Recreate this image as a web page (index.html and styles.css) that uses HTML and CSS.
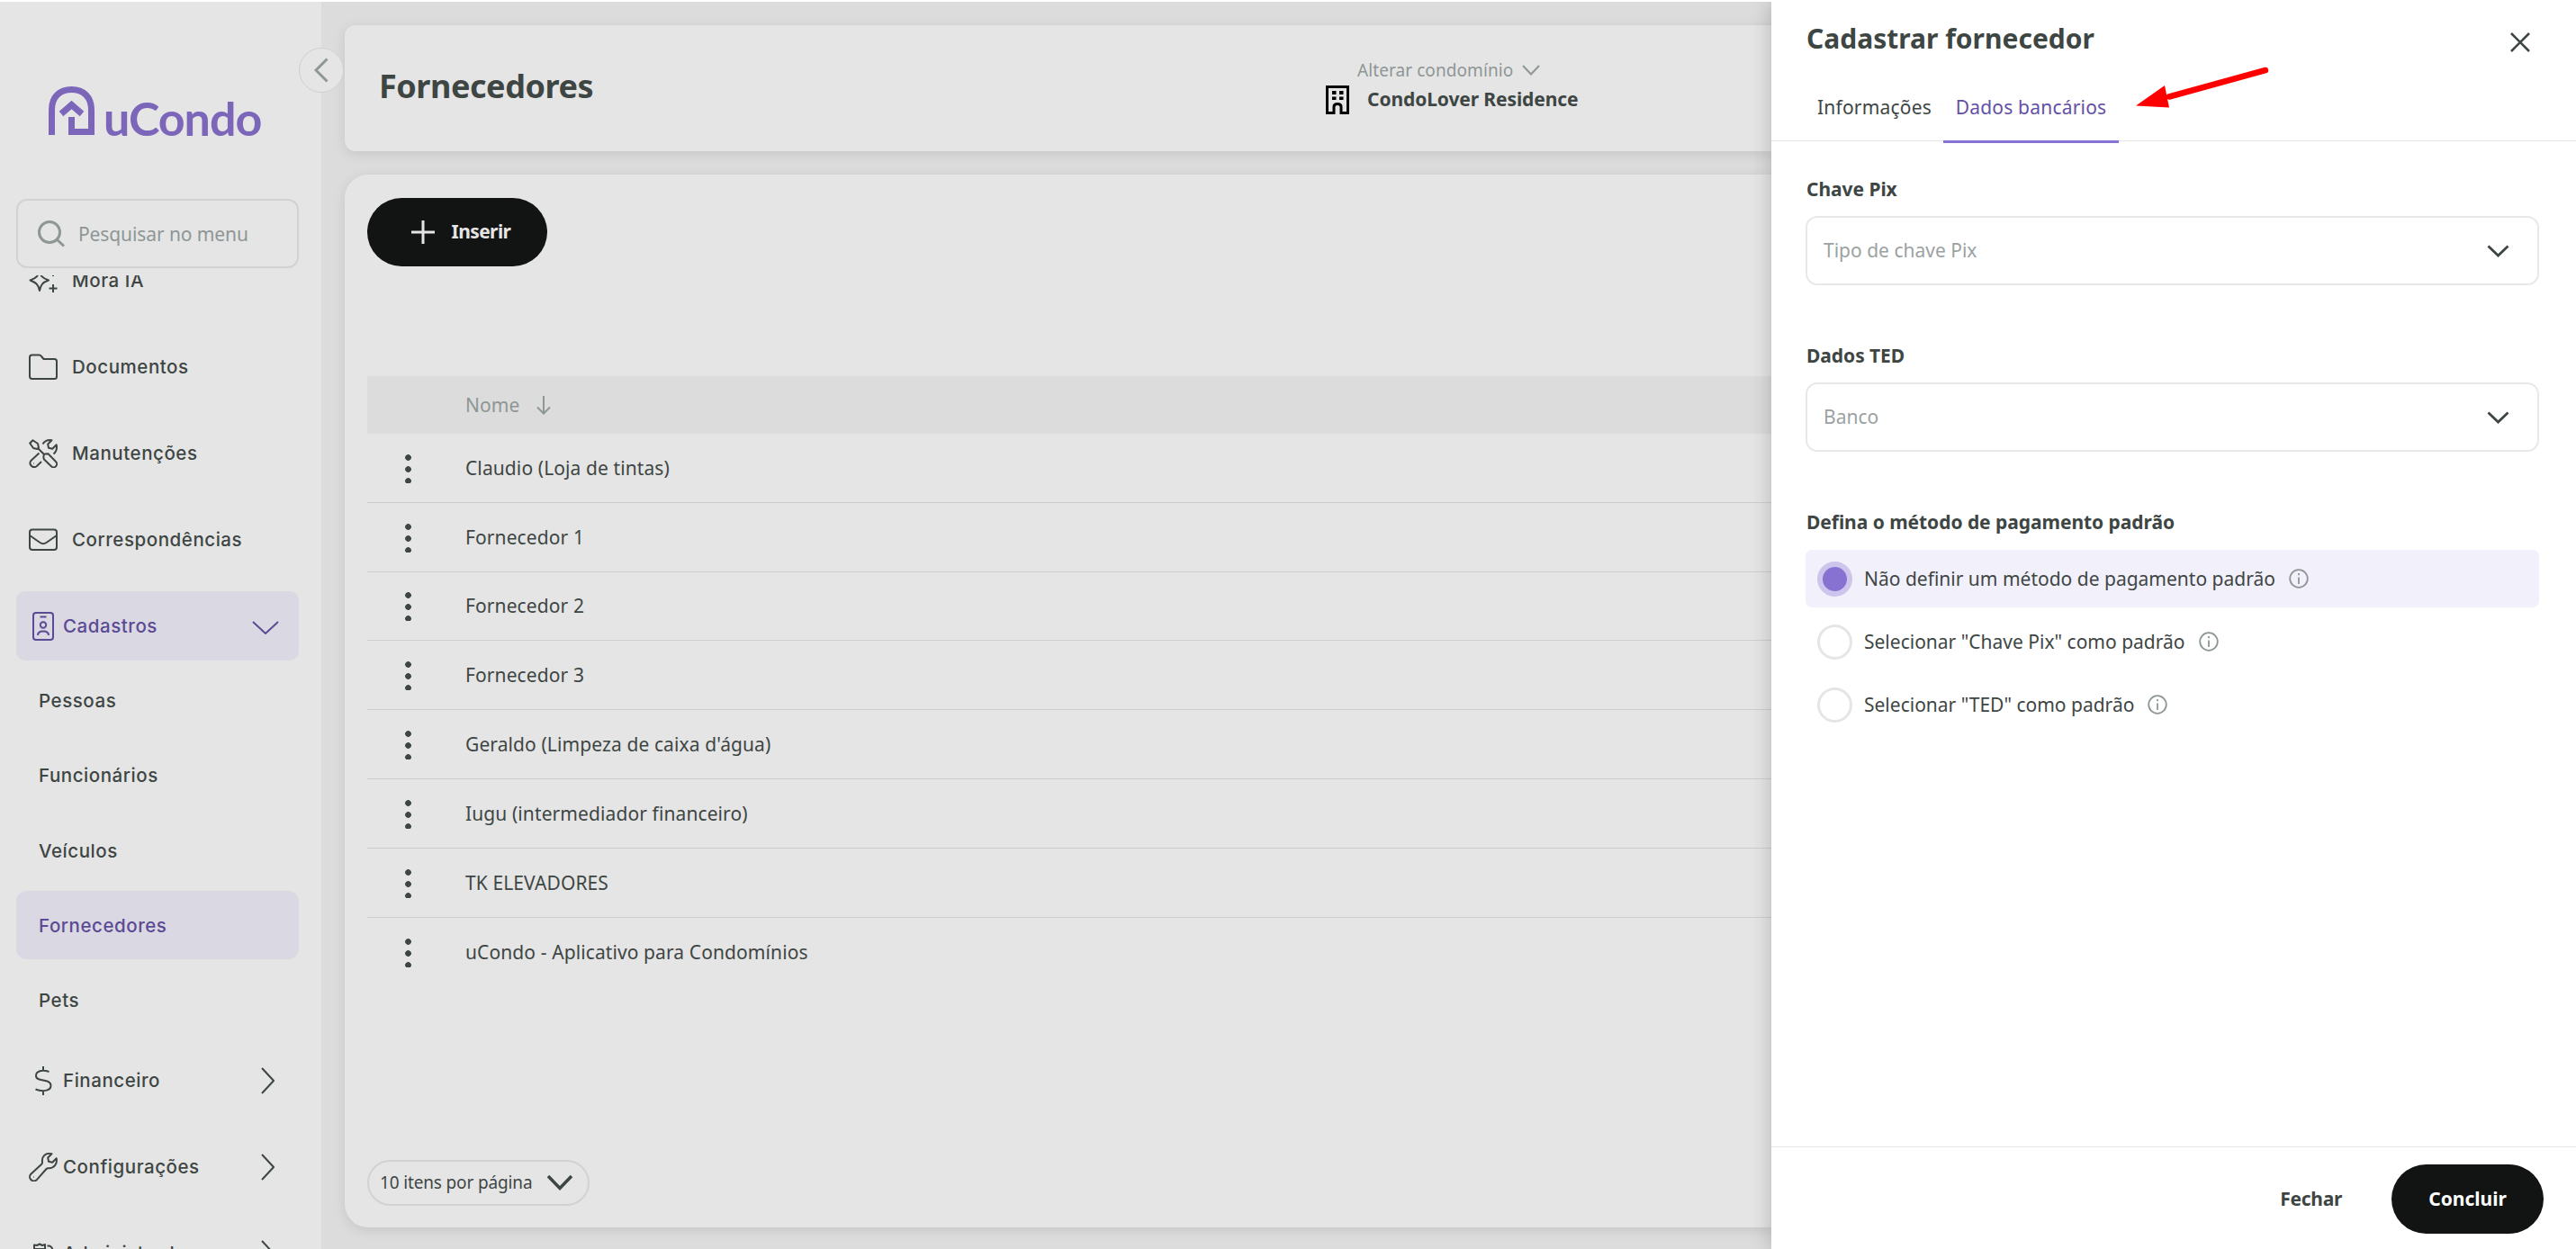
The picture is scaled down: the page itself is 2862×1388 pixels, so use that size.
FILE: index.html
```html
<!DOCTYPE html>
<html lang="pt-br">
<head>
    <meta charset="UTF-8">
    <meta name="viewport" content="width=device-width, initial-scale=1.0">
    <title>uCondo - Fornecedores</title>
    <link rel="stylesheet" href="styles.css">
</head>
<body>
    <div class="app">
        <!-- Menu lateral -->
        <aside class="sidebar">
            <div class="logo">
                <svg width="51" height="54" viewBox="0 0 51 54" fill="none" stroke="currentColor" stroke-width="7">
                    <path d="M3.5 54V26C3.5 12 12 3.5 25.5 3.5S47.500 12 47.500 26V50.500H25.500V34"/>
                    <path d="M14 30.500L25.500 20.500L37 30.500"/>
                </svg>
                <span>uCondo</span>
            </div>
            <button class="collapse-btn">
                <svg width="16" height="28" viewBox="0 0 16 28" fill="none" stroke="currentColor" stroke-width="3"><path d="M14.500 1.500L2 14L14.500 26.500"/></svg>
            </button>
            <div class="search">
                <svg width="32" height="32" viewBox="0 0 32 32" fill="none" stroke="currentColor" stroke-width="3"><circle cx="14" cy="14" r="11.500"/><path d="M22 22L30 29.500"/></svg>
                <span>Pesquisar no menu</span>
            </div>
            <nav class="menu">
                <div class="menu-list">
                    <div class="menu-item">
                        <svg class="menu-icon" viewBox="0 0 32 32"><path d="M12 4C13 11 15 13 22 15.500C15 18 13.500 20 12 27C10.500 20 8 18 1.500 15.500C8 13 10.500 11 12 4ZM27 20V29M22.500 24.500H31.500M27 4V11"/></svg>
                        <span>Mora IA</span>
                    </div>
                    <div class="menu-item">
                        <svg class="menu-icon" viewBox="0 0 32 32"><path d="M1 26V5Q1 2.500 3.500 2.500H11.500Q13 2.500 14 4L16.500 7H28.500Q31 7 31 9.500V26.500Q31 29 28.500 29H3.500Q1 29 1 26Z"/></svg>
                        <span>Documentos</span>
                    </div>
                    <div class="menu-item">
                        <svg class="menu-icon" viewBox="0 0 32 32"><path d="M1.200 4.500L4.500 1.200L10 5L11 9.500L9.500 11L5 10ZM10.500 10.500L17 17M17.500 16.500L21.500 16.200L30 25A3.500 3.500 0 0 1 25 30.300L17 22.500Q15.500 19 17.500 16.500M15.500 5.500C18 1.500 21 .5 25.500 1.200L21.200 5.500L22 9.800L26.200 10.800L30.700 6.300C31.500 10 31 13.500 27.500 16.500M11.500 15.500L2.300 24A4.500 4.500 0 0 0 8.600 30.200L14 25"/><path d="M5 27H5.500"/></svg>
                        <span>Manutenções</span>
                    </div>
                    <div class="menu-item">
                        <svg class="menu-icon" viewBox="0 0 32 32"><rect x="1" y="4.500" width="30" height="22.500" rx="3"/><path d="M1 11L12.500 19Q16 21.500 19.500 19L31 11"/></svg>
                        <span>Correspondências</span>
                    </div>
                    <div class="menu-item menu-group active">
                        <svg class="menu-icon" viewBox="0 0 32 32"><rect x="5" y="1" width="22" height="30" rx="3"/><path d="M12.500 5.500H19.500M10 26C10 22.500 12 21.500 16 21.500S22 22.500 22 26"/><circle cx="16" cy="14.500" r="3.200"/></svg>
                        <span>Cadastros</span>
                        <svg class="menu-arrow open" width="30" height="15" viewBox="0 0 30 15"><path d="M1 1L15 14L29 1"/></svg>
                    </div>
                    <div class="submenu">
                        <div class="submenu-item">Pessoas</div>
                        <div class="submenu-item">Funcionários</div>
                        <div class="submenu-item">Veículos</div>
                        <div class="submenu-item active">Fornecedores</div>
                        <div class="submenu-item">Pets</div>
                    </div>
                    <div class="menu-item menu-group">
                        <svg class="menu-icon" viewBox="0 0 32 32"><path d="M22.500 6C15 3.500 8 5 8 10.500C8 18 24.500 13 24.500 21.500C24.500 27.500 15 28.500 7.500 25.500M16 0V4.500M16 27.500V32"/></svg>
                        <span>Financeiro</span>
                        <svg class="menu-arrow" width="15" height="30" viewBox="0 0 15 30"><path d="M1 1L14 15L1 29"/></svg>
                    </div>
                    <div class="menu-item menu-group">
                        <svg class="menu-icon" viewBox="0 0 32 32"><path d="M25.500 1.300C19 -.5 14 4 15 10.500C15.100 11.500 14.800 12.200 14.200 12.800L2.300 23.700A4.600 4.600 0 0 0 8.800 30.200L19.500 18C20.100 17.400 20.900 17.200 21.800 17.300C28 17.600 32 12.500 30.700 6.300L26.200 10.800L22 9.800L21.200 5.500Z"/><path d="M5 27H5.500"/></svg>
                        <span>Configurações</span>
                        <svg class="menu-arrow" width="15" height="30" viewBox="0 0 15 30"><path d="M1 1L14 15L1 29"/></svg>
                    </div>
                    <div class="menu-item menu-group">
                        <svg class="menu-icon" viewBox="0 0 32 32"><path d="M6 32V6.500L9 7L12 5.500L15 7L18 6V32M6 11H18M20.500 7.500H23Q26 8.500 26.500 12V32"/></svg>
                        <span>Administradoras</span>
                        <svg class="menu-arrow" width="15" height="30" viewBox="0 0 15 30"><path d="M1 1L14 15L1 29"/></svg>
                    </div>
                </div>
            </nav>
        </aside>

        <!-- Conteúdo principal -->
        <main class="content">
            <header class="card page-header">
                <h1>Fornecedores</h1>
                <div class="condo">
                    <div class="condo-switch">
                        <span>Alterar condomínio</span>
                        <svg width="20" height="12" viewBox="0 0 20 12" fill="none" stroke="currentColor" stroke-width="2"><path d="M1 1L10 10.500L19 1"/></svg>
                    </div>
                    <div class="condo-name">
                        <svg width="26" height="32" viewBox="0 0 26 32"><path d="M1.500 1.500H24.500V30.500H17V23.500Q17 20.500 13 20.500T9 23.500V30.500H1.500Z" fill="none" stroke="#000" stroke-width="3"/><path d="M7 6H11.500V10H7ZM15 6H19.500V10H15ZM7 12.500H11.500V16H7ZM15 12.500H19.500V16H15Z"/></svg>
                        <strong>CondoLover Residence</strong>
                    </div>
                </div>
            </header>

            <section class="card list-card">
                <button class="btn insert-btn">
                    <svg width="26" height="26" viewBox="0 0 26 26" stroke="currentColor" stroke-width="3"><path d="M13 0V26M0 13H26"/></svg>
                    <span>Inserir</span>
                </button>
                <div class="table">
                    <div class="table-head">
                        <span>Nome</span>
                        <svg width="16" height="22" viewBox="0 0 16 22" fill="none" stroke="currentColor" stroke-width="2"><path d="M8 1V20M1 13.500L8 20.500L15 13.500"/></svg>
                    </div>
                    <div class="row"><i class="dots"></i><span>Claudio (Loja de tintas)</span></div>
                    <div class="row"><i class="dots"></i><span>Fornecedor 1</span></div>
                    <div class="row"><i class="dots"></i><span>Fornecedor 2</span></div>
                    <div class="row"><i class="dots"></i><span>Fornecedor 3</span></div>
                    <div class="row"><i class="dots"></i><span>Geraldo (Limpeza de caixa d'água)</span></div>
                    <div class="row"><i class="dots"></i><span>Iugu (intermediador financeiro)</span></div>
                    <div class="row"><i class="dots"></i><span>TK ELEVADORES</span></div>
                    <div class="row"><i class="dots"></i><span>uCondo - Aplicativo para Condomínios</span></div>
                </div>
                <button class="page-size">
                    <span>10 itens por página</span>
                    <svg width="30" height="18" viewBox="0 0 30 18" fill="none" stroke="currentColor" stroke-width="3.500"><path d="M2 2L15 15.500L28 2"/></svg>
                </button>
            </section>
        </main>

        <!-- Painel de cadastro -->
        <div class="drawer">
            <div class="drawer-header">
                <h2>Cadastrar fornecedor</h2>
                <svg width="22" height="22" viewBox="0 0 22 22" stroke="currentColor" stroke-width="2.600"><path d="M1 1L21 21M21 1L1 21"/></svg>
            </div>
            <div class="tabs">
                <div class="tab tab-info">Informações</div>
                <div class="tab tab-bank active">Dados bancários</div>
            </div>
            <svg class="pointer" width="150" height="48" viewBox="0 0 150 48"><path d="M37 34.500L144 5" stroke="#ff0000" stroke-width="6.500" stroke-linecap="round"/><path d="M0 44.500L32 22L37 46.500Z" fill="#ff0000"/></svg>
            <div class="drawer-body">
                <h3>Chave Pix</h3>
                <div class="select">
                    <span>Tipo de chave Pix</span>
                    <svg width="25" height="14" viewBox="0 0 25 14"><path d="M1.500 1.500L12.500 12L23.500 1.500"/></svg>
                </div>
                <h3>Dados TED</h3>
                <div class="select">
                    <span>Banco</span>
                    <svg width="25" height="14" viewBox="0 0 25 14"><path d="M1.500 1.500L12.500 12L23.500 1.500"/></svg>
                </div>
                <h3 class="method-title">Defina o método de pagamento padrão</h3>
                <div class="options">
                    <div class="option selected">
                        <i class="radio"></i>
                        <span>Não definir um método de pagamento padrão</span>
                        <svg class="info" viewBox="0 0 22 22"><circle cx="11" cy="11" r="9.800"/><path d="M11 9.500V17M11 5V7.300"/></svg>
                    </div>
                    <div class="option">
                        <i class="radio"></i>
                        <span>Selecionar "Chave Pix" como padrão</span>
                        <svg class="info" viewBox="0 0 22 22"><circle cx="11" cy="11" r="9.800"/><path d="M11 9.500V17M11 5V7.300"/></svg>
                    </div>
                    <div class="option">
                        <i class="radio"></i>
                        <span>Selecionar "TED" como padrão</span>
                        <svg class="info" viewBox="0 0 22 22"><circle cx="11" cy="11" r="9.800"/><path d="M11 9.500V17M11 5V7.300"/></svg>
                    </div>
                </div>
            </div>
            <div class="drawer-footer">
                <button class="link-btn">Fechar</button>
                <button class="btn submit-btn">Concluir</button>
            </div>
        </div>
    </div>
</body>
</html>
```
FILE: styles.css
```css
* {
    box-sizing: border-box;
}
body {
    margin: 0;
    padding-top: 2px;
    height: 1388px;
    overflow: hidden;
    background-color: #fff;
    font-family: "Noto Sans", "Open Sans", sans-serif;
    font-size: 21px;
    color: #3e4644;
}
h1, h2, h3 {
    margin: 0;
    white-space: nowrap;
}
button {
    font: inherit;
    color: inherit;
    border: none;
    background: none;
    padding: 0;
    cursor: pointer;
}
svg {
    flex: none;
    display: block;
}
span, strong {
    white-space: nowrap;
}
.app {
    display: flex;
    height: 1386px;
    overflow: hidden;
    background-color: #dcdcdc;
}

/* Menu lateral */
.sidebar {
    position: relative;
    z-index: 1;
    flex: none;
    display: flex;
    flex-direction: column;
    width: 357px;
    background-color: #e5e5e5;
    font-family: Inter, "Open Sans", sans-serif;
    font-size: 20.5px;
    font-weight: 500;
    letter-spacing: 0.55px;
}
.logo {
    display: flex;
    align-items: flex-end;
    gap: 10px;
    height: 148px;
    padding-left: 54px;
    color: #7c66ba;
}
.logo span {
    font-family: Lato, sans-serif;
    font-size: 52px;
    font-weight: 700;
    line-height: 52px;
    letter-spacing: -1px;
    margin-bottom: -7px;
}
.collapse-btn {
    position: absolute;
    top: 51px;
    right: -25px;
    display: flex;
    align-items: center;
    justify-content: center;
    width: 50px;
    height: 50px;
    border: 1px solid #cfd0d0;
    border-radius: 50%;
    background-color: #e5e5e5;
    color: #8e9696;
}
.search {
    flex: none;
    display: flex;
    align-items: center;
    gap: 14px;
    height: 77px;
    margin: 71px 25px 8px 18px;
    padding-left: 21px;
    border: 2px solid #d1d3d3;
    border-radius: 12px;
    color: #8e9696;
    font-family: "Noto Sans", sans-serif;
    font-size: 21px;
    font-weight: 400;
    letter-spacing: -0.1px;
}
.menu {
    flex: 1;
    overflow: hidden;
    padding: 0 25px 0 18px;
}
.menu-list {
    margin-top: -33px;
}
.menu-item {
    display: flex;
    align-items: center;
    gap: 16px;
    height: 76.8px;
    margin-bottom: 19.2px;
    padding: 0 22px 0 14px;
    border-radius: 10px;
}
.menu-group {
    gap: 6px;
}
.menu-icon {
    width: 32px;
    height: 32px;
    margin-top: 1px;
    fill: none;
    stroke: currentColor;
    stroke-width: 2;
    stroke-linejoin: round;
}
.menu-arrow {
    margin-top: 2px;
    margin-left: auto;
    margin-right: 5px;
    fill: none;
    stroke: currentColor;
    stroke-width: 2;
}
.menu-arrow.open {
    margin-top: 5px;
    margin-right: 0;
}
.menu-item.active, .submenu-item.active {
    background-color: #dad8e2;
    color: #5b4b94;
}
.menu-item.active {
    margin-bottom: 6.4px;
}
.submenu {
    display: flex;
    flex-direction: column;
    gap: 6.4px;
    margin-bottom: 12px;
}
.submenu-item {
    height: 76.8px;
    line-height: 77.5px;
    padding-left: 25px;
    border-radius: 12px;
}

/* Conteudo principal */
.content {
    flex: 1;
    display: flex;
    flex-direction: column;
    gap: 26px;
    padding: 26px 0 24px 26px;
}
.card {
    background-color: #e5e5e5;
    box-shadow: 0 3px 14px rgba(0, 0, 0, 0.1);
}
.page-header {
    display: flex;
    height: 140px;
    padding-left: 38px;
    border-radius: 12px 0 0 12px;
}
.page-header h1 {
    width: 1052px;
    font-size: 36px;
    line-height: 50px;
    letter-spacing: -0.45px;
    padding-top: 43px;
}
.condo {
    padding-top: 36px;
}
.condo-switch {
    display: flex;
    align-items: center;
    gap: 10px;
    padding-left: 35px;
    font-size: 19px;
    line-height: 28px;
    letter-spacing: 0.08px;
    color: #8e9696;
}
.condo-name {
    display: flex;
    align-items: center;
    gap: 20px;
    margin-top: 3px;
}
.condo-name strong {
    letter-spacing: -0.1px;
    padding-bottom: 2px;
}
.list-card {
    flex: 1;
    display: flex;
    flex-direction: column;
    align-items: flex-start;
    padding: 26px 0 24px 25px;
    border-radius: 26px 0 0 26px;
}
.btn {
    display: flex;
    align-items: center;
    justify-content: center;
    height: 77px;
    border-radius: 38.5px;
    background-color: #121413;
    color: #e5e5e5;
    font-weight: 700;
}
.insert-btn {
    gap: 19px;
    width: 200px;
    height: 76px;
    padding-left: 8px;
    letter-spacing: -0.6px;
}
.insert-btn span, .submit-btn, .link-btn {
    padding-bottom: 2px;
}
.table {
    width: 100%;
    margin-top: 122px;
    letter-spacing: 0.1px;
}
.table-head {
    display: flex;
    align-items: center;
    gap: 18px;
    height: 64px;
    padding-left: 109px;
    background-color: #dcdcdc;
    color: #8e9696;
}
.row {
    display: flex;
    align-items: center;
    height: 76.8px;
    padding-left: 42px;
    border-bottom: 1px solid #cdcfcf;
}
.row:last-child {
    border-bottom: none;
}
.dots {
    width: 7px;
    height: 33px;
    margin-top: 1px;
    margin-right: 60px;
    background: radial-gradient(circle, #3e4644 3px, transparent 3.7px) 0 -2px / 7px 13px;
}
.page-size {
    display: flex;
    align-items: center;
    gap: 16px;
    width: 247px;
    height: 51px;
    margin-top: auto;
    padding: 0 0 2px 12px;
    border: 2px solid #d1d3d3;
    border-radius: 26px;
    font-size: 19px;
    letter-spacing: -0.15px;
}

/* Painel de cadastro */
.drawer {
    position: relative;
    z-index: 2;
    flex: none;
    display: flex;
    flex-direction: column;
    width: 894px;
    background-color: #fff;
    box-shadow: 0 0 22px rgba(0, 0, 0, 0.22);
}
.drawer-header {
    display: flex;
    align-items: center;
    justify-content: space-between;
    height: 90px;
    padding: 0 51px 0 39px;
}
.drawer-header h2 {
    font-size: 30px;
    line-height: 40px;
    margin-top: -8px;
}
.tabs {
    flex: none;
    display: flex;
    height: 65px;
    padding-left: 29px;
    border-bottom: 1px solid #e4e6e6;
}
.tab {
    height: 67px;
    line-height: 55px;
    letter-spacing: 0.2px;
    text-align: center;
    white-space: nowrap;
}
.tab-info {
    width: 162px;
    padding-left: 9px;
}
.tab-bank {
    width: 195px;
}
.tab.active {
    border-bottom: 3px solid #8872d1;
    color: #6350a5;
}
.pointer {
    position: absolute;
    left: 405px;
    top: 71px;
}
.drawer-body {
    flex: 1;
    padding: 38px 41px 0 38px;
}
.drawer-body h3 {
    padding-left: 1px;
    font-size: 21px;
    line-height: 30px;
    letter-spacing: -0.05px;
}
.select {
    display: flex;
    align-items: center;
    justify-content: space-between;
    height: 77px;
    margin: 15px 0 63px;
    padding: 0 31px 0 18px;
    border: 2px solid #e7e9e9;
    border-radius: 13px;
}
.select span {
    padding-bottom: 2px;
    color: #9ba2a2;
}
.select svg {
    fill: none;
    stroke: #3e4644;
    stroke-width: 2.8;
}
.options {
    display: flex;
    flex-direction: column;
    gap: 6px;
    margin-top: 16px;
}
.option {
    display: flex;
    align-items: center;
    height: 64px;
    padding-left: 13px;
    border-radius: 7px;
}
.option span {
    padding-bottom: 1px;
}
.option.selected {
    background-color: #f2f0fa;
}
.radio {
    width: 39px;
    height: 39px;
    margin-right: 13px;
    border: 3px solid #e4e6e6;
    border-radius: 50%;
    background-color: #fff;
}
.selected .radio {
    border: 6px solid #cec5ec;
    background-color: #8872d1;
}
.info {
    width: 22px;
    height: 22px;
    margin-left: 15px;
    fill: none;
    stroke: #8e9696;
    stroke-width: 1.8;
}
.drawer-footer {
    display: flex;
    align-items: flex-start;
    justify-content: flex-end;
    gap: 55px;
    height: 114px;
    padding: 19px 36px 0 0;
    border-top: 1px solid #e4e6e6;
}
.link-btn {
    height: 77px;
    font-weight: 700;
    letter-spacing: -0.3px;
}
.submit-btn {
    width: 169px;
    color: #fff;
}
```
